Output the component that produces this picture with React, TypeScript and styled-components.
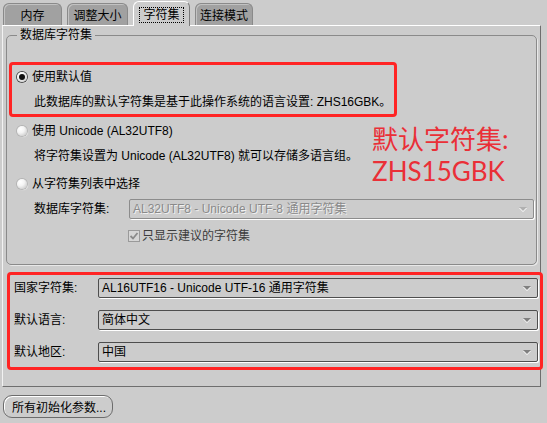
import React from 'react';
import styled, { createGlobalStyle } from 'styled-components';

const FONT = `"Liberation Sans", "Noto Sans CJK SC", sans-serif`;

const Global = createGlobalStyle`
  html, body { margin: 0; padding: 0; background: #cccccc; }
  body { font-family: ${FONT}; font-size: 12px; color: #000; }
  * { box-sizing: border-box; }
`;

const Root = styled.div`
  position: relative;
  width: 547px;
  height: 423px;
  overflow: hidden;
  background: #cccccc;
`;

const TabBar = styled.div`
  position: relative;
  z-index: 1;
  display: flex;
  align-items: flex-end;
  gap: 5px;
  height: 25px;
  padding-left: 3px;
`;

const Tab = styled.div<{ $active?: boolean; $w: number }>`
  width: ${p => p.$w}px;
  height: ${p => (p.$active ? 25 : 22)}px;
  margin-bottom: ${p => (p.$active ? -1 : 0)}px;
  display: flex;
  align-items: center;
  justify-content: center;
  border-radius: 6px 6px 0 0;
  line-height: 14px;
  ${p =>
    p.$active
      ? `
    background: #cccccc;
    border-top: 1px solid #ffffff;
    border-left: 1px solid #ffffff;
    border-right: 1px solid #7a7a7a;
    padding-top: 1px;
  `
      : `
    background: #a1a1a1;
    border: 1px solid #8a8a8a;
    border-bottom: none;
    box-shadow: inset 1px 1px 0 #c2c2c2;
    padding-top: 2px;
  `}
`;

const FocusLabel = styled.span`
  border: 1px dotted #000;
  padding: 0 3px;
  line-height: 14px;
`;

const Panel = styled.div`
  margin: 0 6px 0 2px;
  border-top: 1px solid #ffffff;
  border-left: 1px solid #f2f2f2;
  border-right: 1px solid #6e6e6e;
  border-bottom: 1px solid #6e6e6e;
  padding: 2px 3px 16px 3px;
`;

const Group = styled.fieldset`
  margin: 0;
  padding: 0 0 19px 0;
  border: 1px solid #8a8a8a;
  border-radius: 5px;
  box-shadow: 1px 1px 0 #e8e8e8;
  min-width: 0;
`;

const Legend = styled.legend`
  margin-left: 10px;
  padding: 0 3px;
  line-height: 14px;
  font-size: 12px;
`;

const Highlight = styled.div<{ $mt: number; $ml: number; $mr?: number; $w?: number }>`
  margin: ${p => p.$mt}px ${p => p.$mr ?? 0}px 0 ${p => p.$ml}px;
  ${p => (p.$w ? `width: ${p.$w}px;` : '')}
  border: 3px solid #ff2424;
  border-radius: 4px;
`;

const HighlightBody = styled.div<{ $pad: string; $gap?: number }>`
  padding: ${p => p.$pad};
  display: flex;
  flex-direction: column;
  align-items: flex-start;
  gap: ${p => p.$gap ?? 0}px;
`;

const Row = styled.div<{ $mt?: number; $ml?: number; $mr?: number; $h?: number; $fill?: boolean }>`
  display: flex;
  align-items: center;
  width: ${p => (p.$fill ? 'auto' : 'fit-content')};
  align-self: ${p => (p.$fill ? 'stretch' : 'flex-start')};
  height: ${p => p.$h ?? 18}px;
  margin-top: ${p => p.$mt ?? 0}px;
  margin-left: ${p => p.$ml ?? 0}px;
  margin-right: ${p => p.$mr ?? 0}px;
  line-height: 18px;
  white-space: nowrap;
`;

const Radio = styled.span<{ $checked?: boolean }>`
  width: 10px;
  height: 10px;
  margin-right: 5px;
  border-radius: 50%;
  flex: none;
  position: relative;
  background: radial-gradient(circle at 35% 30%, #ffffff 0%, #f4f4f4 40%, #bdbdbd 100%);
  box-shadow: ${p => (p.$checked ? '0 0 0 1px #4a4a4a' : '0 0 0 1px #b4b4b4')}, 1px 1px 1px #ffffff;
  &::after {
    content: '';
    display: ${p => (p.$checked ? 'block' : 'none')};
    position: absolute;
    left: 2px;
    top: 2px;
    width: 6px;
    height: 6px;
    border-radius: 50%;
    background: #111;
  }
`;

const FieldLabel = styled.span<{ $w: number }>`
  width: ${p => p.$w}px;
  flex: none;
`;

const Combo = styled.div<{ $disabled?: boolean }>`
  flex: 1;
  height: 20px;
  display: flex;
  align-items: center;
  justify-content: space-between;
  padding: 0 6px 0 3px;
  border: 1px solid ${p => (p.$disabled ? '#8c8c8c' : '#4e4e4e')};
  border-radius: 2px;
  box-shadow: 1px 1px 0 #ffffff;
  background: #cccccc;
  color: ${p => (p.$disabled ? '#8a8a8a' : '#000')};
  text-shadow: ${p => (p.$disabled ? '1px 1px 0 #f0f0f0' : 'none')};
  line-height: 18px;
  white-space: nowrap;
`;

const Arrow = styled.span<{ $disabled?: boolean }>`
  width: 0;
  height: 0;
  border-left: 4px solid transparent;
  border-right: 4px solid transparent;
  border-top: 4px solid ${p => (p.$disabled ? '#b0b0b0' : '#808080')};
  filter: drop-shadow(0 1px 0 #ffffff);
`;

const CheckBox = styled.span`
  width: 12px;
  height: 12px;
  flex: none;
  margin-right: 2px;
  border: 1px solid #9a9a9a;
  background: #d6d6d6;
  display: flex;
  align-items: center;
  justify-content: center;
`;

const DisabledText = styled.span`
  color: #3c3c3c;
`;

const Controls = styled.div`
  align-self: stretch;
  display: flex;
  flex-direction: column;
  gap: 12px;
`;

const Button = styled.button`
  margin: 8px 0 0 3px;
  height: 23px;
  width: 110px;
  padding: 0 0 0 8px;
  text-align: left;
  font: inherit;
  font-size: 12px;
  color: #000;
  background: #cccccc;
  border: 1px solid #6c6c6c;
  border-radius: 9px;
  box-shadow: inset 1px 1px 0 #ffffff;
`;

const Note = styled.div`
  position: absolute;
  left: 372px;
  top: 123px;
  font-family: Lato, "Noto Sans CJK SC", sans-serif;
  font-size: 26px;
  color: #ea2f37;
  white-space: nowrap;
`;

const NoteLine = styled.div`
  height: 32px;
  line-height: 32px;
`;

const tabs = [
  { label: '内存', w: 59 },
  { label: '调整大小', w: 61 },
  { label: '字符集', w: 57, active: true },
  { label: '连接模式', w: 58 },
];

const natRows = [
  { label: '国家字符集:', value: 'AL16UTF16 - Unicode UTF-16 通用字符集' },
  { label: '默认语言:', value: '简体中文' },
  { label: '默认地区:', value: '中国' },
];

export default function App() {
  return (
    <Root>
      <Global />
      <TabBar>
        {tabs.map(t => (
          <Tab key={t.label} $w={t.w} $active={t.active}>
            {t.active ? <FocusLabel>{t.label}</FocusLabel> : t.label}
          </Tab>
        ))}
      </TabBar>
      <Panel>
        <Group>
          <Legend>数据库字符集</Legend>
          <Highlight $mt={20} $ml={2} $w={388}>
            <HighlightBody $pad="3px 0 3px 5px" $gap={7}>
              <Row>
                <Radio $checked />
                使用默认值
              </Row>
              <Row $ml={17}>此数据库的默认字符集是基于此操作系统的语言设置: ZHS16GBK。</Row>
            </HighlightBody>
          </Highlight>
          <Row $mt={5} $ml={10}>
            <Radio />
            使用 Unicode (AL32UTF8)
          </Row>
          <Row $mt={7} $ml={27}>将字符集设置为 Unicode (AL32UTF8) 就可以存储多语言组。</Row>
          <Row $mt={10} $ml={10}>
            <Radio />
            从字符集列表中选择
          </Row>
          <Row $fill $mt={6} $ml={27} $mr={2} $h={20}>
            <FieldLabel $w={95}>数据库字符集:</FieldLabel>
            <Combo $disabled>
              AL32UTF8 - Unicode UTF-8 通用字符集
              <Arrow $disabled />
            </Combo>
          </Row>
          <Row $mt={8} $ml={121}>
            <CheckBox>
              <svg width="10" height="10" viewBox="0 0 10 10">
                <path d="M1.5 5 L4 7.5 L8.5 2" stroke="#8a8a8a" strokeWidth="1.8" fill="none" />
              </svg>
            </CheckBox>
            <DisabledText>只显示建议的字符集</DisabledText>
          </Row>
        </Group>
        <Highlight $mt={7} $ml={1} $mr={-6}>
          <HighlightBody $pad="3px 2px 5px 4px">
            <Controls>
              {natRows.map(r => (
                <Row $fill key={r.label} $h={20}>
                  <FieldLabel $w={84}>{r.label}</FieldLabel>
                  <Combo>
                    {r.value}
                    <Arrow />
                  </Combo>
                </Row>
              ))}
            </Controls>
          </HighlightBody>
        </Highlight>
      </Panel>
      <Button>所有初始化参数...</Button>
      <Note>
        <NoteLine>默认字符集:</NoteLine>
        <NoteLine>ZHS15GBK</NoteLine>
      </Note>
    </Root>
  );
}
